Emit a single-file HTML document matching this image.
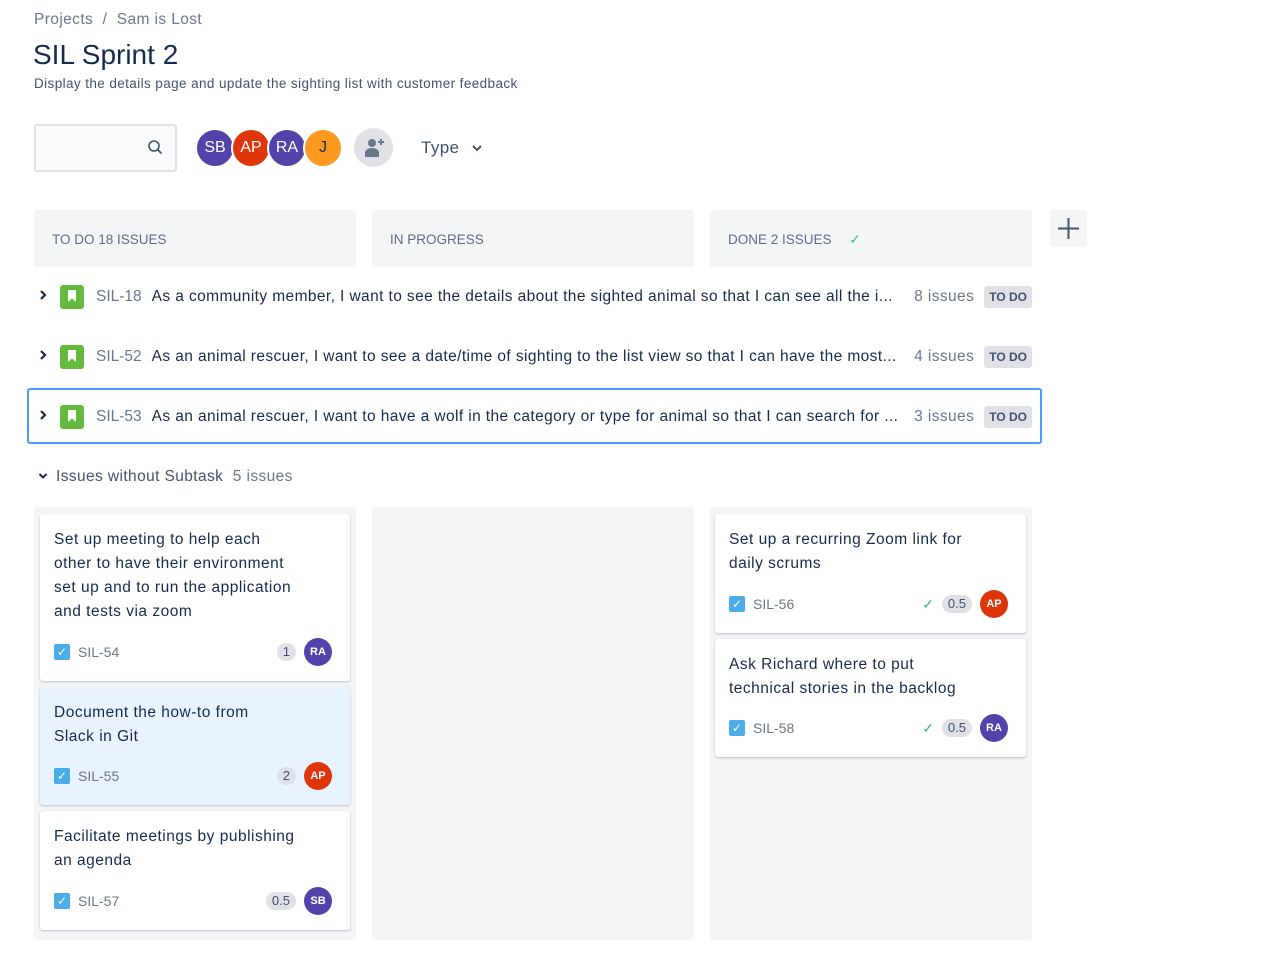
<!DOCTYPE html>
<html><head><style>
*{box-sizing:border-box;margin:0;padding:0}
body{width:1288px;height:978px;background:#fff;font-family:"Liberation Sans",sans-serif;color:#172b4d;position:relative;overflow:hidden;letter-spacing:0.4px}
.a{position:absolute}
.av{position:absolute;width:36px;height:36px;border-radius:50%;color:#fff;font-size:16px;display:flex;align-items:center;justify-content:center;border:2px solid #fff;letter-spacing:0}
.col{position:absolute;background:#f4f5f7;border-radius:4px}
.hd{position:absolute;height:57px;top:210px;background:#f4f5f7;border-radius:4px 4px 0 0;font-size:13.5px;color:#5e6c84;padding:22px 0 0 18px;letter-spacing:0}
.row{position:absolute;left:34px;width:998px;height:40px;font-size:15.5px;display:flex;align-items:center;white-space:nowrap}
.chev{width:18px;margin-left:4px}
.story{width:24px;height:24px;background:#63ba3c;border-radius:3px;margin:0 12px 0 4px;position:relative}
.story:after{content:"";position:absolute;left:8px;top:5px;width:8px;height:12px;background:#fff;clip-path:polygon(0 0,100% 0,100% 100%,50% 70%,0 100%)}
.key{color:#6b778c;margin-right:10px;letter-spacing:0}
.cnt{color:#6b778c;margin-left:auto;margin-right:10px}
.lz{background:#dfe1e6;color:#42526e;font-weight:bold;font-size:12px;padding:4px 5px;border-radius:3px;letter-spacing:0}
.card{position:absolute;background:#fff;border-radius:3px;box-shadow:0 1px 2px rgba(9,30,66,.25);padding:14px 14px 0 14px;font-size:15.5px;line-height:24px;letter-spacing:0.5px}
.ft{position:absolute;left:14px;right:18px;bottom:16px;height:26px;display:flex;align-items:center;font-size:14px;color:#6b778c;letter-spacing:0}
.cb{width:16px;height:16px;background:#4bade8;border-radius:2px;margin-right:8px;color:#fff;font-size:12px;line-height:16px;text-align:center}
.pill{margin-left:auto;background:#dfe1e6;border-radius:10px;padding:0 6px;font-size:13px;color:#42526e;line-height:18px;margin-right:8px}
.sav{width:28px;height:28px;border-radius:50%;color:#fff;font-size:11px;font-weight:bold;display:flex;align-items:center;justify-content:center}
.ck{color:#36b37e;margin-left:auto;margin-right:8px;font-size:14px}
</style></head><body>
<div class="a" style="left:34px;top:11px;font-size:15.5px;color:#6b778c">Projects &nbsp;/&nbsp; Sam is Lost</div>
<div class="a" style="left:33px;top:39px;font-size:28px;color:#172b4d;letter-spacing:0">SIL Sprint 2</div>
<div class="a" style="left:34px;top:76px;font-size:13.5px;color:#42526e">Display the details page and update the sighting list with customer feedback</div>
<div class="a" style="left:34px;top:124px;width:143px;height:48px;border:2px solid #dfe1e6;border-radius:3px;background:#fafbfc"></div>
<svg class="a" style="left:147px;top:139px" width="16" height="16" viewBox="0 0 16 16"><circle cx="7" cy="7" r="5" fill="none" stroke="#42526e" stroke-width="1.6"/><path d="M11 11l3.5 3.5" stroke="#42526e" stroke-width="1.8"/></svg>
<div class="av" style="left:195px;top:128px;width:40px;height:40px;background:#5243aa">SB</div>
<div class="av" style="left:231px;top:128px;width:40px;height:40px;background:#de350b">AP</div>
<div class="av" style="left:267px;top:128px;width:40px;height:40px;background:#5243aa">RA</div>
<div class="av" style="left:303px;top:128px;width:40px;height:40px;background:#ff991f;color:#172b4d">J</div>
<div class="a" style="left:354px;top:128px;width:39px;height:39px;border-radius:50%;background:#dfe1e6"></div>
<svg class="a" style="left:362px;top:136px" width="24" height="24" viewBox="0 0 24 24"><circle cx="10" cy="7" r="4" fill="#6b778c"/><path d="M3 21v-4c0-3 3-5 7-5s7 2 7 5v4z" fill="#6b778c"/><path d="M19 3v6M16 6h6" stroke="#6b778c" stroke-width="2"/></svg>
<div class="a" style="left:421px;top:138px;font-size:17px;color:#42526e">Type</div>
<svg class="a" style="left:471px;top:143px" width="12" height="10" viewBox="0 0 12 10"><path d="M2 3l4 4 4-4" fill="none" stroke="#42526e" stroke-width="2"/></svg>

<div class="hd" style="left:34px;width:322px">TO DO 18 ISSUES</div>
<div class="hd" style="left:372px;width:322px">IN PROGRESS</div>
<div class="hd" style="left:710px;width:322px">DONE 2 ISSUES <span style="color:#36b37e;margin-left:14px">✓</span></div>
<div class="a" style="left:1050px;top:210px;width:37px;height:37px;background:#f4f5f7;border-radius:3px"></div>
<svg class="a" style="left:1057px;top:217px" width="23" height="23" viewBox="0 0 23 23"><path d="M11.5 1v21M1 11.5h21" stroke="#42526e" stroke-width="2"/></svg>

<div class="row" style="top:277px"><span class="chev"><svg width="10" height="12" viewBox="0 0 10 12"><path d="M3 2l4 4-4 4" fill="none" stroke="#172b4d" stroke-width="2.2"/></svg></span><span class="story"></span><span class="key">SIL-18</span>As a community member, I want to see the details about the sighted animal so that I can see all the i...<span class="cnt">8 issues</span><span class="lz">TO DO</span></div>
<div class="row" style="top:337px"><span class="chev"><svg width="10" height="12" viewBox="0 0 10 12"><path d="M3 2l4 4-4 4" fill="none" stroke="#172b4d" stroke-width="2.2"/></svg></span><span class="story"></span><span class="key">SIL-52</span>As an animal rescuer, I want to see a date/time of sighting to the list view so that I can have the most...<span class="cnt">4 issues</span><span class="lz">TO DO</span></div>
<div class="a" style="left:27px;top:388px;width:1015px;height:56px;border:2px solid #4c9aff;border-radius:3px"></div>
<div class="row" style="top:397px"><span class="chev"><svg width="10" height="12" viewBox="0 0 10 12"><path d="M3 2l4 4-4 4" fill="none" stroke="#172b4d" stroke-width="2.2"/></svg></span><span class="story"></span><span class="key">SIL-53</span>As an animal rescuer, I want to have a wolf in the category or type for animal so that I can search for ...<span class="cnt">3 issues</span><span class="lz">TO DO</span></div>

<div class="a" style="left:38px;top:468px;font-size:15.5px;color:#42526e"><svg width="10" height="10" viewBox="0 0 10 10" style="margin-right:8px"><path d="M1.5 3l3.5 3.5 3.5-3.5" fill="none" stroke="#172b4d" stroke-width="2"/></svg>Issues without Subtask &nbsp;<span style="color:#6b778c">5 issues</span></div>

<div class="col" style="left:34px;top:507px;width:322px;height:433px"></div>
<div class="col" style="left:372px;top:507px;width:322px;height:433px"></div>
<div class="col" style="left:710px;top:507px;width:322px;height:433px"></div>

<div class="card" style="left:40px;top:514px;width:310px;height:167px">Set up meeting to help each<br>other to have their environment<br>set up and to run the application<br>and tests via zoom
<div class="ft"><span class="cb">✓</span>SIL-54<span class="pill">1</span><span class="sav" style="background:#5243aa">RA</span></div></div>
<div class="card" style="left:40px;top:687px;width:310px;height:118px;background:#e9f2ff">Document the how-to from<br>Slack in Git
<div class="ft"><span class="cb">✓</span>SIL-55<span class="pill">2</span><span class="sav" style="background:#de350b">AP</span></div></div>
<div class="card" style="left:40px;top:811px;width:310px;height:119px">Facilitate meetings by publishing<br>an agenda
<div class="ft"><span class="cb">✓</span>SIL-57<span class="pill">0.5</span><span class="sav" style="background:#5243aa">SB</span></div></div>

<div class="card" style="left:715px;top:514px;width:311px;height:119px">Set up a recurring Zoom link for<br>daily scrums
<div class="ft"><span class="cb">✓</span>SIL-56<span class="ck">✓</span><span class="pill" style="margin-left:0">0.5</span><span class="sav" style="background:#de350b">AP</span></div></div>
<div class="card" style="left:715px;top:639px;width:311px;height:118px">Ask Richard where to put<br>technical stories in the backlog
<div class="ft"><span class="cb">✓</span>SIL-58<span class="ck">✓</span><span class="pill" style="margin-left:0">0.5</span><span class="sav" style="background:#5243aa">RA</span></div></div>
</body></html>
